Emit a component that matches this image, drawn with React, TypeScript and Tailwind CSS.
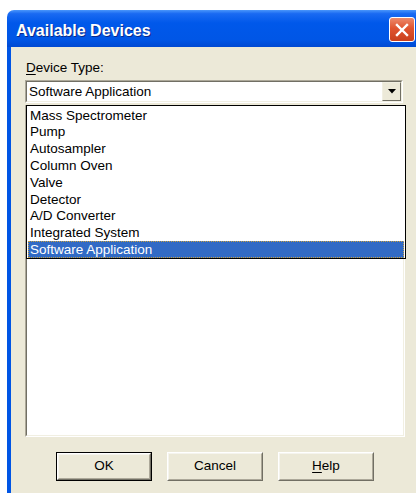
import React from 'react';

const deviceTypes = [
  'Mass Spectrometer',
  'Pump',
  'Autosampler',
  'Column Oven',
  'Valve',
  'Detector',
  'A/D Converter',
  'Integrated System',
  'Software Application',
];

const font = { fontFamily: '"Liberation Sans", Arial, sans-serif' };

// Classic raised push button with the two-line 3D edge
const PushButton: React.FC<{ isDefault?: boolean; children: React.ReactNode }> = ({ isDefault, children }) => {
  const face = (
    <div className="h-full w-full border border-t-white border-l-white border-b-[#716f64] border-r-[#716f64]">
      <div className="h-full w-full border border-t-[#f5f4ee] border-l-[#f5f4ee] border-b-[#aca899] border-r-[#aca899] flex items-center justify-center text-[13.5px] text-black">
        {children}
      </div>
    </div>
  );
  return (
    <div className={`w-[96px] h-[29px] bg-[#ece9d8] ${isDefault ? 'border border-black' : ''}`}>
      {face}
    </div>
  );
};

const App: React.FC = () => {
  return (
    <div className="w-[416px] h-[493px] bg-white pl-[7px] pt-[10px] overflow-hidden" style={font}>
      <div className="w-[409px] h-full flex flex-col rounded-tl-[7px] overflow-hidden">
        {/* Title bar */}
        <div className="h-[37px] flex items-center pl-[9px] bg-[linear-gradient(to_bottom,#4a96fb_0%,#1a6af2_10%,#0058ea_35%,#0056e6_80%,#0049d2_100%)]">
          <span className="mt-[4px] text-white font-bold text-[16px] [text-shadow:1px_1px_0_#0a2a8a]">
            Available Devices
          </span>
          <div className="ml-auto mr-[1px] mt-[2px] w-[26px] h-[25px] rounded-[3px] border border-white bg-[linear-gradient(to_bottom,#ec8a6c_0%,#e0542f_45%,#c9401d_100%)] flex items-center justify-center">
            <svg width="14" height="14" viewBox="0 0 14 14">
              <path d="M2 2 L12 12 M12 2 L2 12" stroke="white" strokeWidth="2.4" strokeLinecap="square" />
            </svg>
          </div>
        </div>

        {/* Window body with the left frame edge */}
        <div className="flex-1 bg-[#0055e5] pl-[4px] flex">
          <div className="flex-1 bg-[#ece9d8] pt-[13px] pl-[14px] flex flex-col">
            <div className="h-[16px] leading-[16px] text-[13.5px] text-black pl-[1px]">
              <span className="underline underline-offset-2">D</span>evice Type:
            </div>

            {/* Combo box */}
            <div className="mt-[4px] h-[23px] w-[378px] border border-t-[#aca899] border-l-[#aca899] border-b-white border-r-white">
              <div className="h-full w-full border border-t-[#716f64] border-l-[#716f64] border-b-[#f1efe2] border-r-[#f1efe2] bg-white flex items-center">
                <span className="flex-1 pl-[2px] text-[13.5px] text-black leading-none">Software Application</span>
                <div className="w-[19px] h-full bg-[#ece9d8] border border-t-[#f1efe2] border-l-[#f1efe2] border-b-[#716f64] border-r-[#716f64] flex items-center justify-center">
                  <svg width="8" height="5" viewBox="0 0 8 5">
                    <path d="M0 0 H8 L4 4.5 Z" fill="black" />
                  </svg>
                </div>
              </div>
            </div>

            {/* List box with the open drop-down list over it */}
            <div className="relative mt-[2px] h-[332px] w-[380px] border border-t-[#aca899] border-l-[#aca899] border-b-white border-r-white">
              <div className="h-full w-full border border-t-[#716f64] border-l-[#716f64] border-b-[#f1efe2] border-r-[#f1efe2] bg-white" />
              <div className="absolute top-[-1px] left-[0px] w-[380px] border border-black bg-white p-[1px] pb-[0px]">
                {deviceTypes.map((name, i) => {
                  const selected = i === deviceTypes.length - 1;
                  return (
                    <div
                      key={name}
                      className={`h-[16.8px] flex items-center pl-[2px] text-[13.5px] leading-none ${
                        selected
                          ? 'bg-[#316ac5] text-white outline-1 outline-dotted outline-[#c8a040] -outline-offset-1'
                          : 'text-black'
                      }`}
                    >
                      {name}
                    </div>
                  );
                })}
              </div>
            </div>

            {/* Dialog buttons */}
            <div className="mt-[15px] flex gap-[15px] pl-[31px]">
              <PushButton isDefault>OK</PushButton>
              <PushButton>Cancel</PushButton>
              <PushButton>
                <span>
                  <span className="underline underline-offset-2">H</span>elp
                </span>
              </PushButton>
            </div>
          </div>
        </div>
      </div>
    </div>
  );
};

export default App;
